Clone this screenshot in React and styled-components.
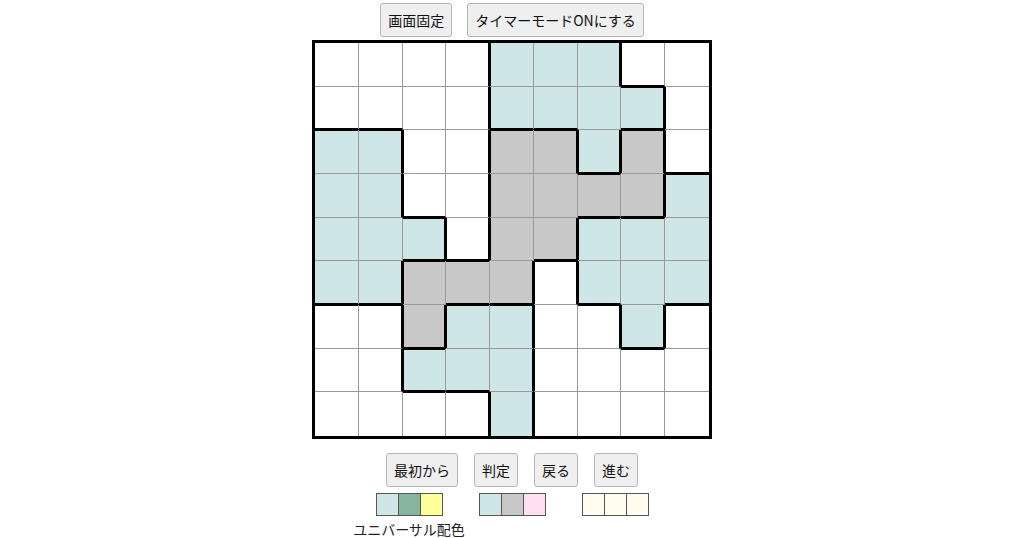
import React from 'react';
import styled, {createGlobalStyle} from 'styled-components';

const GlobalStyle = createGlobalStyle`
    body {
        margin: 0;
        background: #fff;
        font-family: "Noto Sans CJK JP", "Noto Sans", sans-serif;
    }
`;

const board = [
    'WWWWBBBWW',
    'WWWWBBBBW',
    'BBWWGGBGW',
    'BBWWGGGGB',
    'BBBWGGBBB',
    'BBGGGWBBB',
    'WWGBBWWBW',
    'WWBBBWWWW',
    'WWWWBWWWW',
];

const cellColors = {W: '#ffffff', B: '#cfe6e7', G: '#c8c8c8'};

const palettes = [
    {colors: ['#cfe6e7', '#88b5a0', '#ffff99'], label: 'ユニバーサル配色'},
    {colors: ['#cfe6e7', '#c8c8c8', '#ffdff0']},
    {colors: ['#fffbee', '#fffbee', '#fffbee']},
];

const App = () => {
    const at = (r, c) => board[r][c];

    return <Page>
        <GlobalStyle/>
        <ButtonRow>
            <Button>画面固定</Button>
            <Button>タイマーモードONにする</Button>
        </ButtonRow>
        <Board>
            {board.map((row, r) => row.split('').map((v, c) => (
                <Cell
                    key={r + '-' + c}
                    $color={cellColors[v]}
                    $lastCol={c === 8}
                    $lastRow={r === 8}
                    $thickR={c < 8 && at(r, c + 1) !== v}
                    $thickB={r < 8 && at(r + 1, c) !== v}
                    $thickL={c > 0 && at(r, c - 1) !== v}
                    $thickT={r > 0 && at(r - 1, c) !== v}
                />
            )))}
        </Board>
        <ButtonRow $bottom>
            <Button>最初から</Button>
            <Button>判定</Button>
            <Button>戻る</Button>
            <Button>進む</Button>
        </ButtonRow>
        <PaletteRow>
            {palettes.map((p, i) => (
                <PaletteGroup key={i}>
                    <Swatches>
                        {p.colors.map((col, j) => <Swatch key={j} $color={col}/>)}
                    </Swatches>
                    {p.label && <PaletteLabel>{p.label}</PaletteLabel>}
                </PaletteGroup>
            ))}
        </PaletteRow>
    </Page>
}

const Page = styled.div`
    display: flex;
    flex-direction: column;
    align-items: center;
    padding-top: 3px;
`;

const ButtonRow = styled.div`
    display: flex;
    gap: ${p => p.$bottom ? '16px' : '15px'};
    margin-top: ${p => p.$bottom ? '14px' : '0'};
    margin-left: ${p => p.$bottom ? '0' : '0'};
`;

const Button = styled.button`
    font-family: "Noto Sans CJK JP", "Noto Sans", sans-serif;
    font-size: 14px;
    line-height: 20px;
    color: #111;
    background: #efefef;
    border: 1px solid #b4b4b4;
    border-radius: 3px;
    padding: 6px 7px;
    cursor: pointer;
`;

const Board = styled.div`
    margin-top: 3px;
    display: grid;
    grid-template-columns: repeat(9, 1fr);
    grid-template-rows: repeat(9, 1fr);
    width: 394px;
    height: 393px;
    border: 3px solid #000;
`;

const Cell = styled.div`
    box-sizing: border-box;
    background: ${p => p.$color};
    border-right: ${p => p.$lastCol ? 'none' : p.$thickR ? '2px solid #000' : '1px solid #999'};
    border-bottom: ${p => p.$lastRow ? 'none' : p.$thickB ? '2px solid #000' : '1px solid #999'};
    box-shadow: ${p => {
        const s = [];
        if (p.$thickL) s.push('inset 1px 0 0 #000');
        if (p.$thickT) s.push('inset 0 1px 0 #000');
        return s.length ? s.join(', ') : 'none';
    }};
`;

const PaletteRow = styled.div`
    display: flex;
    gap: 36px;
    align-items: flex-start;
    margin-top: 6px;
`;

const PaletteGroup = styled.div`
    display: flex;
    flex-direction: column;
    align-items: center;
    width: 67px;
`;

const Swatches = styled.div`
    display: flex;
    border: 1px solid #555;
`;

const Swatch = styled.div`
    width: 21px;
    height: 21px;
    background: ${p => p.$color};
    & + & {
        border-left: 1px solid #555;
    }
`;

const PaletteLabel = styled.div`
    margin-top: 3px;
    font-size: 14px;
    line-height: 20px;
    color: #222;
    white-space: nowrap;
`;

export default App;
